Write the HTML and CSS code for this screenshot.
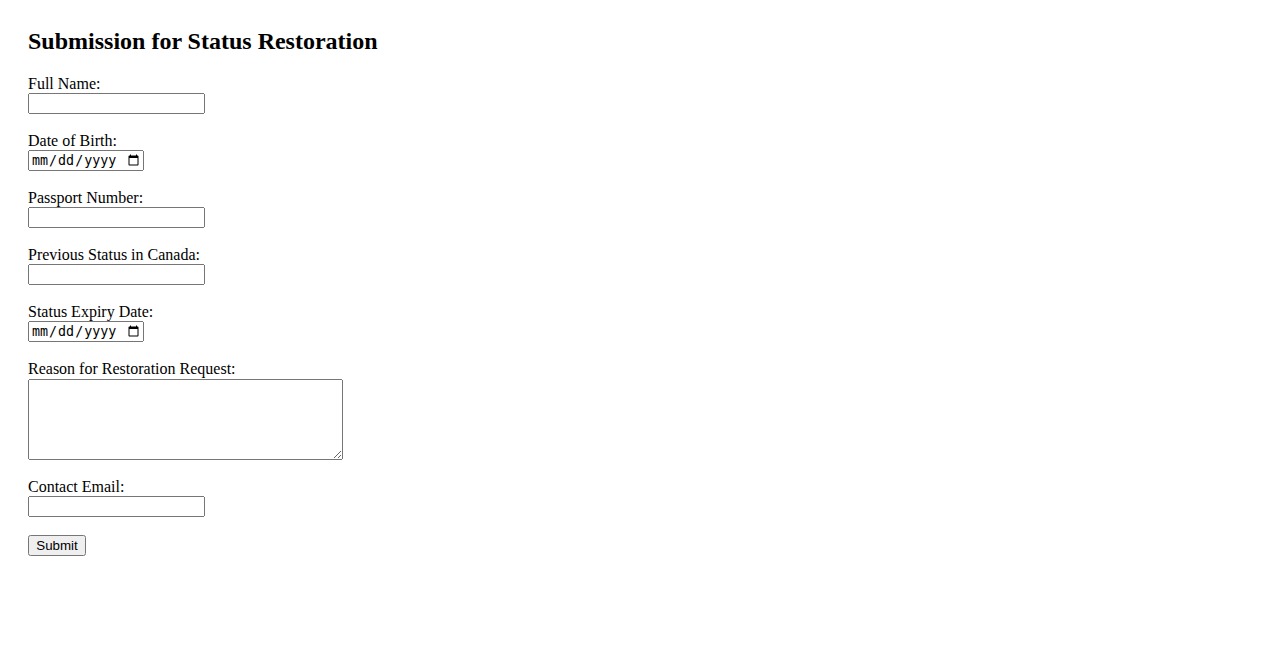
FILE: index.html
```html
<!DOCTYPE html>
<html lang="en">
<head>
<meta charset="utf-8">
<title>Submission for Status Restoration</title>
<link rel="stylesheet" href="styles.css">
</head>
<body>
<div class="page">
<h2 class="title">Submission for Status Restoration</h2>
<form class="form">
<label for="name">Full Name:</label><br>
<input class="field" type="text" id="name"><br><br>
<label for="dob">Date of Birth:</label><br>
<input class="date" type="date" id="dob"><br><br>
<label for="passport">Passport Number:</label><br>
<input class="field" type="text" id="passport"><br><br>
<label for="prev">Previous Status in Canada:</label><br>
<input class="field" type="text" id="prev"><br><br>
<label for="expiry">Status Expiry Date:</label><br>
<input class="date" type="date" id="expiry"><br><br>
<label for="reason">Reason for Restoration Request:</label><br>
<textarea class="area" id="reason"></textarea><br><br>
<label for="email">Contact Email:</label><br>
<input class="field" type="email" id="email"><br><br>
<button class="btn" type="submit">Submit</button>
</form>
</div>
</body>
</html>
```
FILE: styles.css
```css
body {
  margin: 8px;
  font-family: "Liberation Serif", serif;
  font-size: 16px;
  color: #000;
  background: #fff;
}
.page {
  padding: 20px;
}
.title {
  margin: 0 0 19.92px;
  font-size: 24px;
  font-weight: bold;
}
.form {
  margin: 0;
}
.field,
.btn {
  font-family: "Liberation Sans", Arial, sans-serif;
  font-size: 13.33px;
}
.field {
  width: 177px;
  height: 21px;
  box-sizing: border-box;
}
.date {
  font-family: "DejaVu Sans Mono", monospace;
  font-size: 13.33px;
  width: 116px;
  height: 21px;
  box-sizing: border-box;
}
.area {
  width: 315px;
  height: 81px;
  box-sizing: border-box;
  vertical-align: top;
  margin-top: 1px;
}
.btn {
  height: 21px;
  padding: 1px 6px;
  width: 58px;
  box-sizing: border-box;
}
```
